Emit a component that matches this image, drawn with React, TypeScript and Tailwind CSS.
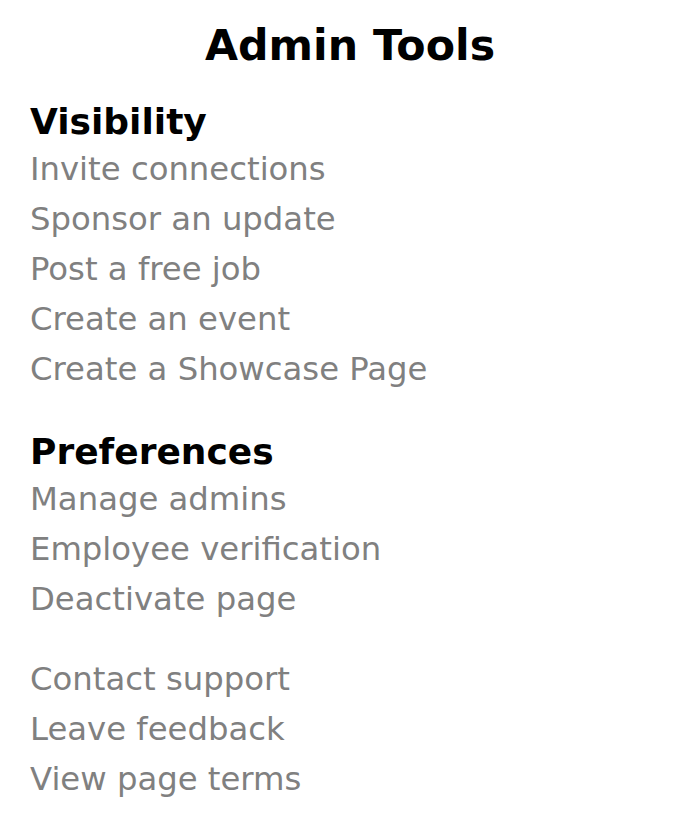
/* Admin Tools menu: centered title, grouped gray link lists. */

const sections: { heading?: string; items: string[] }[] = [
  {
    heading: "Visibility",
    items: [
      "Invite connections",
      "Sponsor an update",
      "Post a free job",
      "Create an event",
      "Create a Showcase Page",
    ],
  },
  {
    heading: "Preferences",
    items: ["Manage admins", "Employee verification", "Deactivate page"],
  },
  {
    items: ["Contact support", "Leave feedback", "View page terms"],
  },
];

export default function App() {
  return (
    <div className="min-h-screen bg-white px-[30px] pt-[21px] pb-[10px] font-['DejaVu_Sans',sans-serif]">
      <h1 className="text-center text-[42.7px] leading-[49px] font-bold text-black">Admin Tools</h1>

      <div className="mt-[30px] flex flex-col">
        {sections.map((s, i) => (
          <section key={i} className={i === 0 ? "" : s.heading ? "mt-[36px]" : "mt-[30px]"}>
            {s.heading && (
              <h2 className="text-[36px] leading-[44px] font-bold text-black">{s.heading}</h2>
            )}
            <ul className="flex flex-col">
              {s.items.map((item) => (
                <li key={item} className="text-[32.3px] leading-[50px] text-[#808080]">
                  {item}
                </li>
              ))}
            </ul>
          </section>
        ))}
      </div>
    </div>
  );
}
